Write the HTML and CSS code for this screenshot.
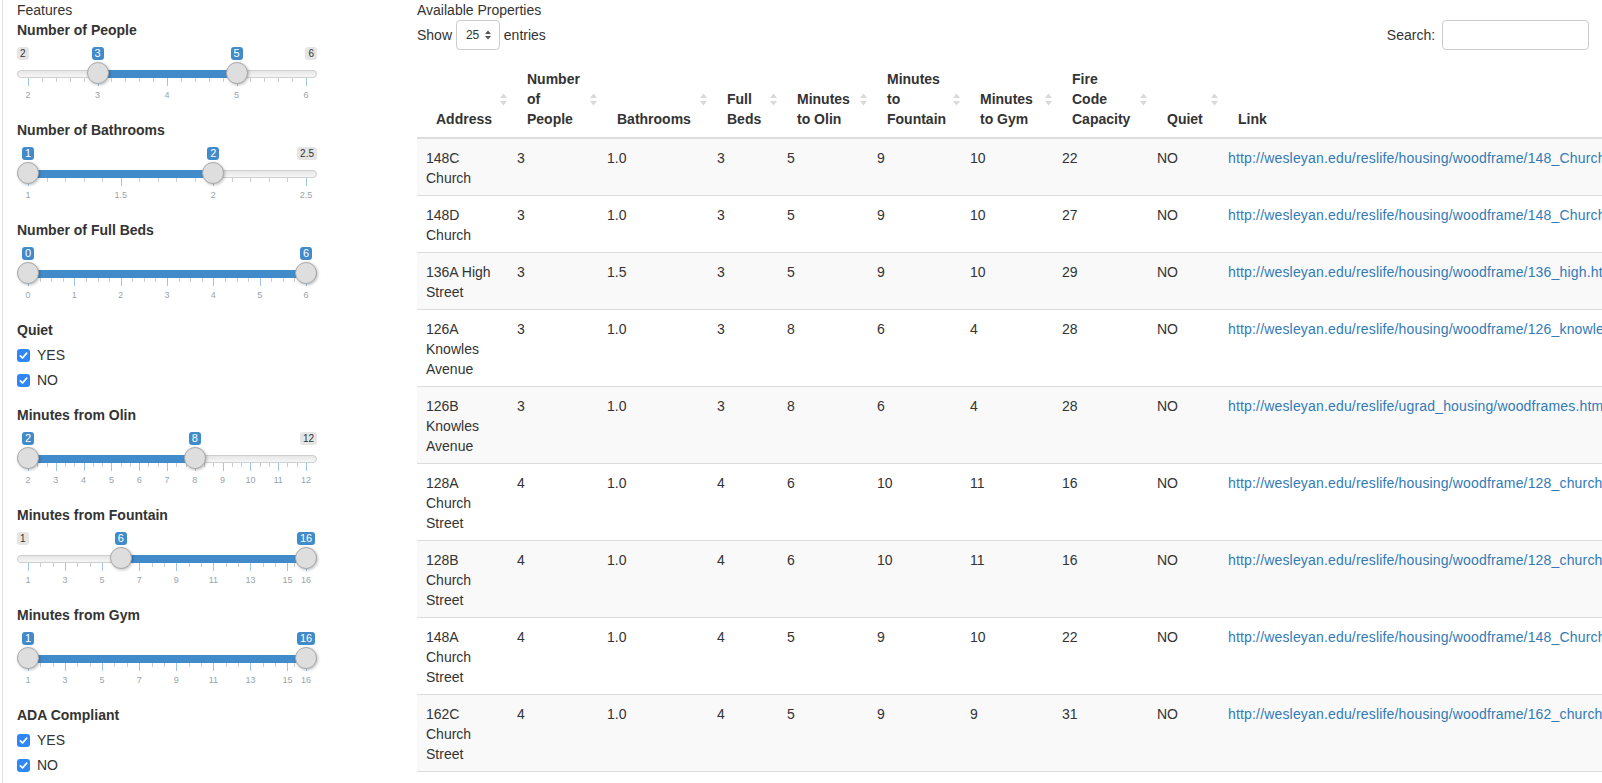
FILE: index.html
```html
<!DOCTYPE html>
<html lang="en">
<head>
<meta charset="utf-8">
<title>Available Properties</title>
<link rel="stylesheet" href="styles.css">
</head>
<body>
<div class="page">
  <aside class="sidebar">
    <div class="section-title">Features</div>

    <div class="form-group">
      <label class="control-label">Number of People</label>
      <div class="irs" data-min="2" data-max="6" data-from="3" data-to="5" data-grid="4"></div>
    </div>

    <div class="form-group">
      <label class="control-label">Number of Bathrooms</label>
      <div class="irs" data-min="1" data-max="2.5" data-from="1" data-to="2" data-grid="3"></div>
    </div>

    <div class="form-group">
      <label class="control-label">Number of Full Beds</label>
      <div class="irs" data-min="0" data-max="6" data-from="0" data-to="6" data-grid="6"></div>
    </div>

    <div class="form-group">
      <label class="control-label">Quiet</label>
      <div class="options">
        <div class="checkbox"><span class="cb"><svg width="13" height="13" viewBox="0 0 13 13"><rect x="0" y="0" width="13" height="13" rx="3" fill="#2f87f5"/><path d="M3.4 6.9 L5.5 9 L9.7 4.1" fill="none" stroke="#fff" stroke-width="1.7" stroke-linecap="round" stroke-linejoin="round"/></svg></span><span>YES</span></div>
        <div class="checkbox"><span class="cb"><svg width="13" height="13" viewBox="0 0 13 13"><rect x="0" y="0" width="13" height="13" rx="3" fill="#2f87f5"/><path d="M3.4 6.9 L5.5 9 L9.7 4.1" fill="none" stroke="#fff" stroke-width="1.7" stroke-linecap="round" stroke-linejoin="round"/></svg></span><span>NO</span></div>
      </div>
    </div>

    <div class="form-group">
      <label class="control-label">Minutes from Olin</label>
      <div class="irs" data-min="2" data-max="12" data-from="2" data-to="8" data-grid="10"></div>
    </div>

    <div class="form-group">
      <label class="control-label">Minutes from Fountain</label>
      <div class="irs" data-min="1" data-max="16" data-from="6" data-to="16" data-grid="7.5"></div>
    </div>

    <div class="form-group">
      <label class="control-label">Minutes from Gym</label>
      <div class="irs" data-min="1" data-max="16" data-from="1" data-to="16" data-grid="7.5"></div>
    </div>

    <div class="form-group">
      <label class="control-label">ADA Compliant</label>
      <div class="options">
        <div class="checkbox"><span class="cb"><svg width="13" height="13" viewBox="0 0 13 13"><rect x="0" y="0" width="13" height="13" rx="3" fill="#2f87f5"/><path d="M3.4 6.9 L5.5 9 L9.7 4.1" fill="none" stroke="#fff" stroke-width="1.7" stroke-linecap="round" stroke-linejoin="round"/></svg></span><span>YES</span></div>
        <div class="checkbox"><span class="cb"><svg width="13" height="13" viewBox="0 0 13 13"><rect x="0" y="0" width="13" height="13" rx="3" fill="#2f87f5"/><path d="M3.4 6.9 L5.5 9 L9.7 4.1" fill="none" stroke="#fff" stroke-width="1.7" stroke-linecap="round" stroke-linejoin="round"/></svg></span><span>NO</span></div>
      </div>
    </div>
  </aside>

  <main class="main">
    <div class="section-title">Available Properties</div>
    <div class="dt-top">
      <div class="dt-length">Show <span class="dt-select"><span class="dt-select-val">25</span><svg class="dt-select-arrows" width="6" height="10" viewBox="0 0 6 10"><path d="M0 4 L3 0.5 L6 4 Z M0 6 L3 9.5 L6 6 Z" fill="#555"/></svg></span> entries</div>
      <div class="dt-filter">Search: <span class="dt-search"></span></div>
    </div>

    <table class="dt">
      <colgroup>
        <col class="c-addr"><col class="c-people"><col class="c-bath"><col class="c-beds"><col class="c-olin"><col class="c-fount"><col class="c-gym"><col class="c-fire"><col class="c-quiet"><col class="c-link">
      </colgroup>
      <thead>
        <tr>
          <th>Address<svg class="sort" width="7" height="13" viewBox="0 0 7 13"><path d="M0 5 L3.5 0.5 L7 5 Z M0 8 L3.5 12.5 L7 8 Z"/></svg></th>
          <th>Number of People<svg class="sort" width="7" height="13" viewBox="0 0 7 13"><path d="M0 5 L3.5 0.5 L7 5 Z M0 8 L3.5 12.5 L7 8 Z"/></svg></th>
          <th>Bathrooms<svg class="sort" width="7" height="13" viewBox="0 0 7 13"><path d="M0 5 L3.5 0.5 L7 5 Z M0 8 L3.5 12.5 L7 8 Z"/></svg></th>
          <th>Full Beds<svg class="sort" width="7" height="13" viewBox="0 0 7 13"><path d="M0 5 L3.5 0.5 L7 5 Z M0 8 L3.5 12.5 L7 8 Z"/></svg></th>
          <th>Minutes to Olin<svg class="sort" width="7" height="13" viewBox="0 0 7 13"><path d="M0 5 L3.5 0.5 L7 5 Z M0 8 L3.5 12.5 L7 8 Z"/></svg></th>
          <th>Minutes to Fountain<svg class="sort" width="7" height="13" viewBox="0 0 7 13"><path d="M0 5 L3.5 0.5 L7 5 Z M0 8 L3.5 12.5 L7 8 Z"/></svg></th>
          <th>Minutes to Gym<svg class="sort" width="7" height="13" viewBox="0 0 7 13"><path d="M0 5 L3.5 0.5 L7 5 Z M0 8 L3.5 12.5 L7 8 Z"/></svg></th>
          <th>Fire Code Capacity<svg class="sort" width="7" height="13" viewBox="0 0 7 13"><path d="M0 5 L3.5 0.5 L7 5 Z M0 8 L3.5 12.5 L7 8 Z"/></svg></th>
          <th>Quiet<svg class="sort" width="7" height="13" viewBox="0 0 7 13"><path d="M0 5 L3.5 0.5 L7 5 Z M0 8 L3.5 12.5 L7 8 Z"/></svg></th>
          <th>Link<svg class="sort" width="7" height="13" viewBox="0 0 7 13"><path d="M0 5 L3.5 0.5 L7 5 Z M0 8 L3.5 12.5 L7 8 Z"/></svg></th>
        </tr>
      </thead>
      <tbody>
        <tr><td>148C Church</td><td>3</td><td>1.0</td><td>3</td><td>5</td><td>9</td><td>10</td><td>22</td><td>NO</td><td class="link"><a href="#">http://wesleyan.edu/reslife/housing/woodframe/148_Church.html</a></td></tr>
        <tr><td>148D Church</td><td>3</td><td>1.0</td><td>3</td><td>5</td><td>9</td><td>10</td><td>27</td><td>NO</td><td class="link"><a href="#">http://wesleyan.edu/reslife/housing/woodframe/148_Church.html</a></td></tr>
        <tr><td>136A High Street</td><td>3</td><td>1.5</td><td>3</td><td>5</td><td>9</td><td>10</td><td>29</td><td>NO</td><td class="link"><a href="#">http://wesleyan.edu/reslife/housing/woodframe/136_high.html</a></td></tr>
        <tr><td>126A Knowles Avenue</td><td>3</td><td>1.0</td><td>3</td><td>8</td><td>6</td><td>4</td><td>28</td><td>NO</td><td class="link"><a href="#">http://wesleyan.edu/reslife/housing/woodframe/126_knowles.html</a></td></tr>
        <tr><td>126B Knowles Avenue</td><td>3</td><td>1.0</td><td>3</td><td>8</td><td>6</td><td>4</td><td>28</td><td>NO</td><td class="link"><a href="#">http://wesleyan.edu/reslife/ugrad_housing/woodframes.html</a></td></tr>
        <tr><td>128A Church Street</td><td>4</td><td>1.0</td><td>4</td><td>6</td><td>10</td><td>11</td><td>16</td><td>NO</td><td class="link"><a href="#">http://wesleyan.edu/reslife/housing/woodframe/128_church.html</a></td></tr>
        <tr><td>128B Church Street</td><td>4</td><td>1.0</td><td>4</td><td>6</td><td>10</td><td>11</td><td>16</td><td>NO</td><td class="link"><a href="#">http://wesleyan.edu/reslife/housing/woodframe/128_church.html</a></td></tr>
        <tr><td>148A Church Street</td><td>4</td><td>1.0</td><td>4</td><td>5</td><td>9</td><td>10</td><td>22</td><td>NO</td><td class="link"><a href="#">http://wesleyan.edu/reslife/housing/woodframe/148_Church.html</a></td></tr>
        <tr><td>162C Church Street</td><td>4</td><td>1.0</td><td>4</td><td>5</td><td>9</td><td>9</td><td>31</td><td>NO</td><td class="link"><a href="#">http://wesleyan.edu/reslife/housing/woodframe/162_church.html</a></td></tr>
      </tbody>
    </table>
  </main>
</div>
<script src="script.js"></script>
</body>
</html>
```

FILE: styles.css
```css
* { box-sizing: border-box; }

html, body {
  margin: 0;
  padding: 0;
  overflow: hidden;
}

body {
  font-family: "Liberation Sans", Arial, Helvetica, sans-serif;
  font-size: 14px;
  line-height: 20px;
  color: #333;
  background: #fff;
}

.page {
  display: flex;
  align-items: flex-start;
  height: 783px;
}

/* ---------- sidebar ---------- */
.sidebar {
  flex: none;
  width: 415px;
  height: 783px;
  margin-left: 2px;
  border-left: 1px solid #e2e2e2;
  padding-left: 14px;
}

.section-title {
  height: 20px;
}

.form-group {
  margin-bottom: 15px;
}

.control-label {
  display: block;
  width: fit-content;
  font-weight: bold;
  margin-bottom: 5px;
}

.options {
  display: flex;
  flex-direction: column;
  gap: 5px;
}

.checkbox {
  display: flex;
  align-items: center;
  height: 20px;
}

.cb {
  display: flex;
  width: 13px;
  height: 13px;
  margin-right: 7px;
}

/* ---------- range slider ---------- */
.irs {
  position: relative;
  width: 300px;
  height: 60px;
}

.irs-line {
  position: absolute;
  top: 25px;
  left: 0;
  right: 0;
  height: 8px;
  border: 1px solid #cfcfcf;
  border-radius: 16px;
  background: linear-gradient(to bottom, #dddddd -50%, #ffffff 150%);
}

.irs-bar {
  position: absolute;
  top: 25px;
  height: 8px;
  background: #428bca;
}

.irs-handle {
  position: absolute;
  top: 17px;
  width: 22px;
  height: 22px;
  border-radius: 50%;
  background: #dedede;
  border: 1px solid #a9a9a9;
  box-shadow: 1px 1px 3px rgba(0, 0, 0, 0.25);
  z-index: 3;
}

.irs-min,
.irs-max,
.irs-from,
.irs-to {
  position: absolute;
  top: 2px;
  padding: 1px 3px;
  border-radius: 3px;
  line-height: 11px;
  white-space: nowrap;
  z-index: 4;
}

.irs-min,
.irs-max {
  font-size: 10px;
  color: #333;
  background: rgba(0, 0, 0, 0.1);
}

.irs-min { left: 0; }
.irs-max { right: 0; }

.irs-from,
.irs-to {
  font-size: 11px;
  color: #fff;
  background: #428bca;
}

.irs-hidden { visibility: hidden; }

.irs-grid {
  position: absolute;
  top: 33px;
  left: 11px;
  width: 278px;
  height: 27px;
}

.irs-pol {
  position: absolute;
  top: 0;
  width: 1px;
  height: 8px;
  background: #428bca;
  opacity: 0.5;
}

.irs-pol.small {
  height: 4px;
  background: #999;
}

.irs-grid-text {
  position: absolute;
  bottom: 5px;
  font-size: 9px;
  line-height: 9px;
  color: #99a4ac;
  white-space: nowrap;
  transform: translateX(-50%);
}

/* ---------- main / table ---------- */
.main {
  flex: 1;
  min-width: 0;
  padding-right: 13px;
}

.dt-top {
  display: flex;
  justify-content: space-between;
  align-items: center;
  height: 30px;
}

.dt-length,
.dt-filter {
  display: flex;
  align-items: center;
  white-space: pre;
}

.dt-select {
  display: flex;
  align-items: center;
  justify-content: space-between;
  width: 44px;
  height: 30px;
  padding: 0 8px 0 9px;
  border: 1px solid #ccc;
  border-radius: 4px;
  font-size: 12px;
}

.dt-select-arrows { display: block; }

.dt-search {
  display: block;
  width: 147px;
  height: 30px;
  margin-left: 3px;
  border: 1px solid #ccc;
  border-radius: 4px;
  background: #fff;
}

.dt {
  margin-top: 11px;
  border-collapse: separate;
  border-spacing: 0;
  table-layout: fixed;
  width: 1302px;
}

.c-addr { width: 91px; }
.c-people { width: 90px; }
.c-bath { width: 110px; }
.c-beds { width: 70px; }
.c-olin { width: 90px; }
.c-fount { width: 93px; }
.c-gym { width: 92px; }
.c-fire { width: 95px; }
.c-quiet { width: 71px; }
.c-link { width: 500px; }

.dt th {
  position: relative;
  text-align: left;
  vertical-align: bottom;
  font-weight: bold;
  padding: 8px 13px 8px 19px;
  border-bottom: 2px solid #ddd;
}

.dt th .sort {
  position: absolute;
  right: 1px;
  top: 50%;
  margin-top: -6px;
  fill: #d9d9d9;
}

.dt td {
  vertical-align: top;
  padding: 9px 9px 7px;
  border-bottom: 1px solid #ddd;
}

.dt tbody tr:nth-child(odd) td {
  background: #f9f9f9;
}

.dt td.link {
  white-space: nowrap;
}

.dt a {
  color: #337ab7;
  text-decoration: none;
  letter-spacing: 0.17px;
}
```

FILE: script.js
```js
(function () {
  var W = 300, HW = 22, R = W - HW;

  function fmt(v) {
    return String(parseFloat(v.toFixed(4)));
  }

  function add(cls, parent) {
    var e = document.createElement('span');
    e.className = cls;
    parent.appendChild(e);
    return e;
  }

  document.querySelectorAll('.irs').forEach(function (el) {
    var min = +el.dataset.min,
        max = +el.dataset.max,
        from = +el.dataset.from,
        to = +el.dataset.to,
        num = +el.dataset.grid;

    function pct(v) { return (v - min) / (max - min) * 100; }

    add('irs-line', el);

    var cf = HW / 2 + pct(from) * R / 100;
    var ct = HW / 2 + pct(to) * R / 100;

    var bar = add('irs-bar', el);
    bar.style.left = cf + 'px';
    bar.style.width = (ct - cf) + 'px';

    /* grid */
    var grid = add('irs-grid', el);
    var smallMax = 4;
    if (num > 4) smallMax = 3;
    if (num > 7) smallMax = 2;
    if (num > 14) smallMax = 1;
    if (num > 28) smallMax = 0;
    var bw = 100 / num;
    for (var i = 0; i < num + 1; i++) {
      var bp = Math.min(100, bw * i);
      var sw = (bp - bw * (i - 1)) / (smallMax + 1);
      if (bp !== 0) {
        for (var z = 1; z <= smallMax; z++) {
          var s = add('irs-pol small', grid);
          s.style.left = (bp - sw * z) + '%';
        }
      }
      var p = add('irs-pol', grid);
      p.style.left = bp + '%';
      var t = add('irs-grid-text', grid);
      t.textContent = fmt(min + (max - min) * bp / 100);
      t.style.left = bp + '%';
    }

    /* handles */
    [cf, ct].forEach(function (c) {
      var h = add('irs-handle', el);
      h.style.left = (c - HW / 2) + 'px';
    });

    /* labels */
    var minL = add('irs-min', el); minL.textContent = fmt(min);
    var maxL = add('irs-max', el); maxL.textContent = fmt(max);
    var fromL = add('irs-from', el); fromL.textContent = fmt(from);
    var toL = add('irs-to', el); toL.textContent = fmt(to);

    [[fromL, cf], [toL, ct]].forEach(function (a) {
      var w = a[0].offsetWidth;
      var l = Math.max(0, Math.min(W - w, a[1] - w / 2));
      a[0].style.left = l + 'px';
    });

    var fl = parseFloat(fromL.style.left);
    var tr = parseFloat(toL.style.left) + toL.offsetWidth;
    if (fl < minL.offsetWidth + 2) minL.classList.add('irs-hidden');
    if (tr > W - maxL.offsetWidth - 2) maxL.classList.add('irs-hidden');
  });
})();
```
